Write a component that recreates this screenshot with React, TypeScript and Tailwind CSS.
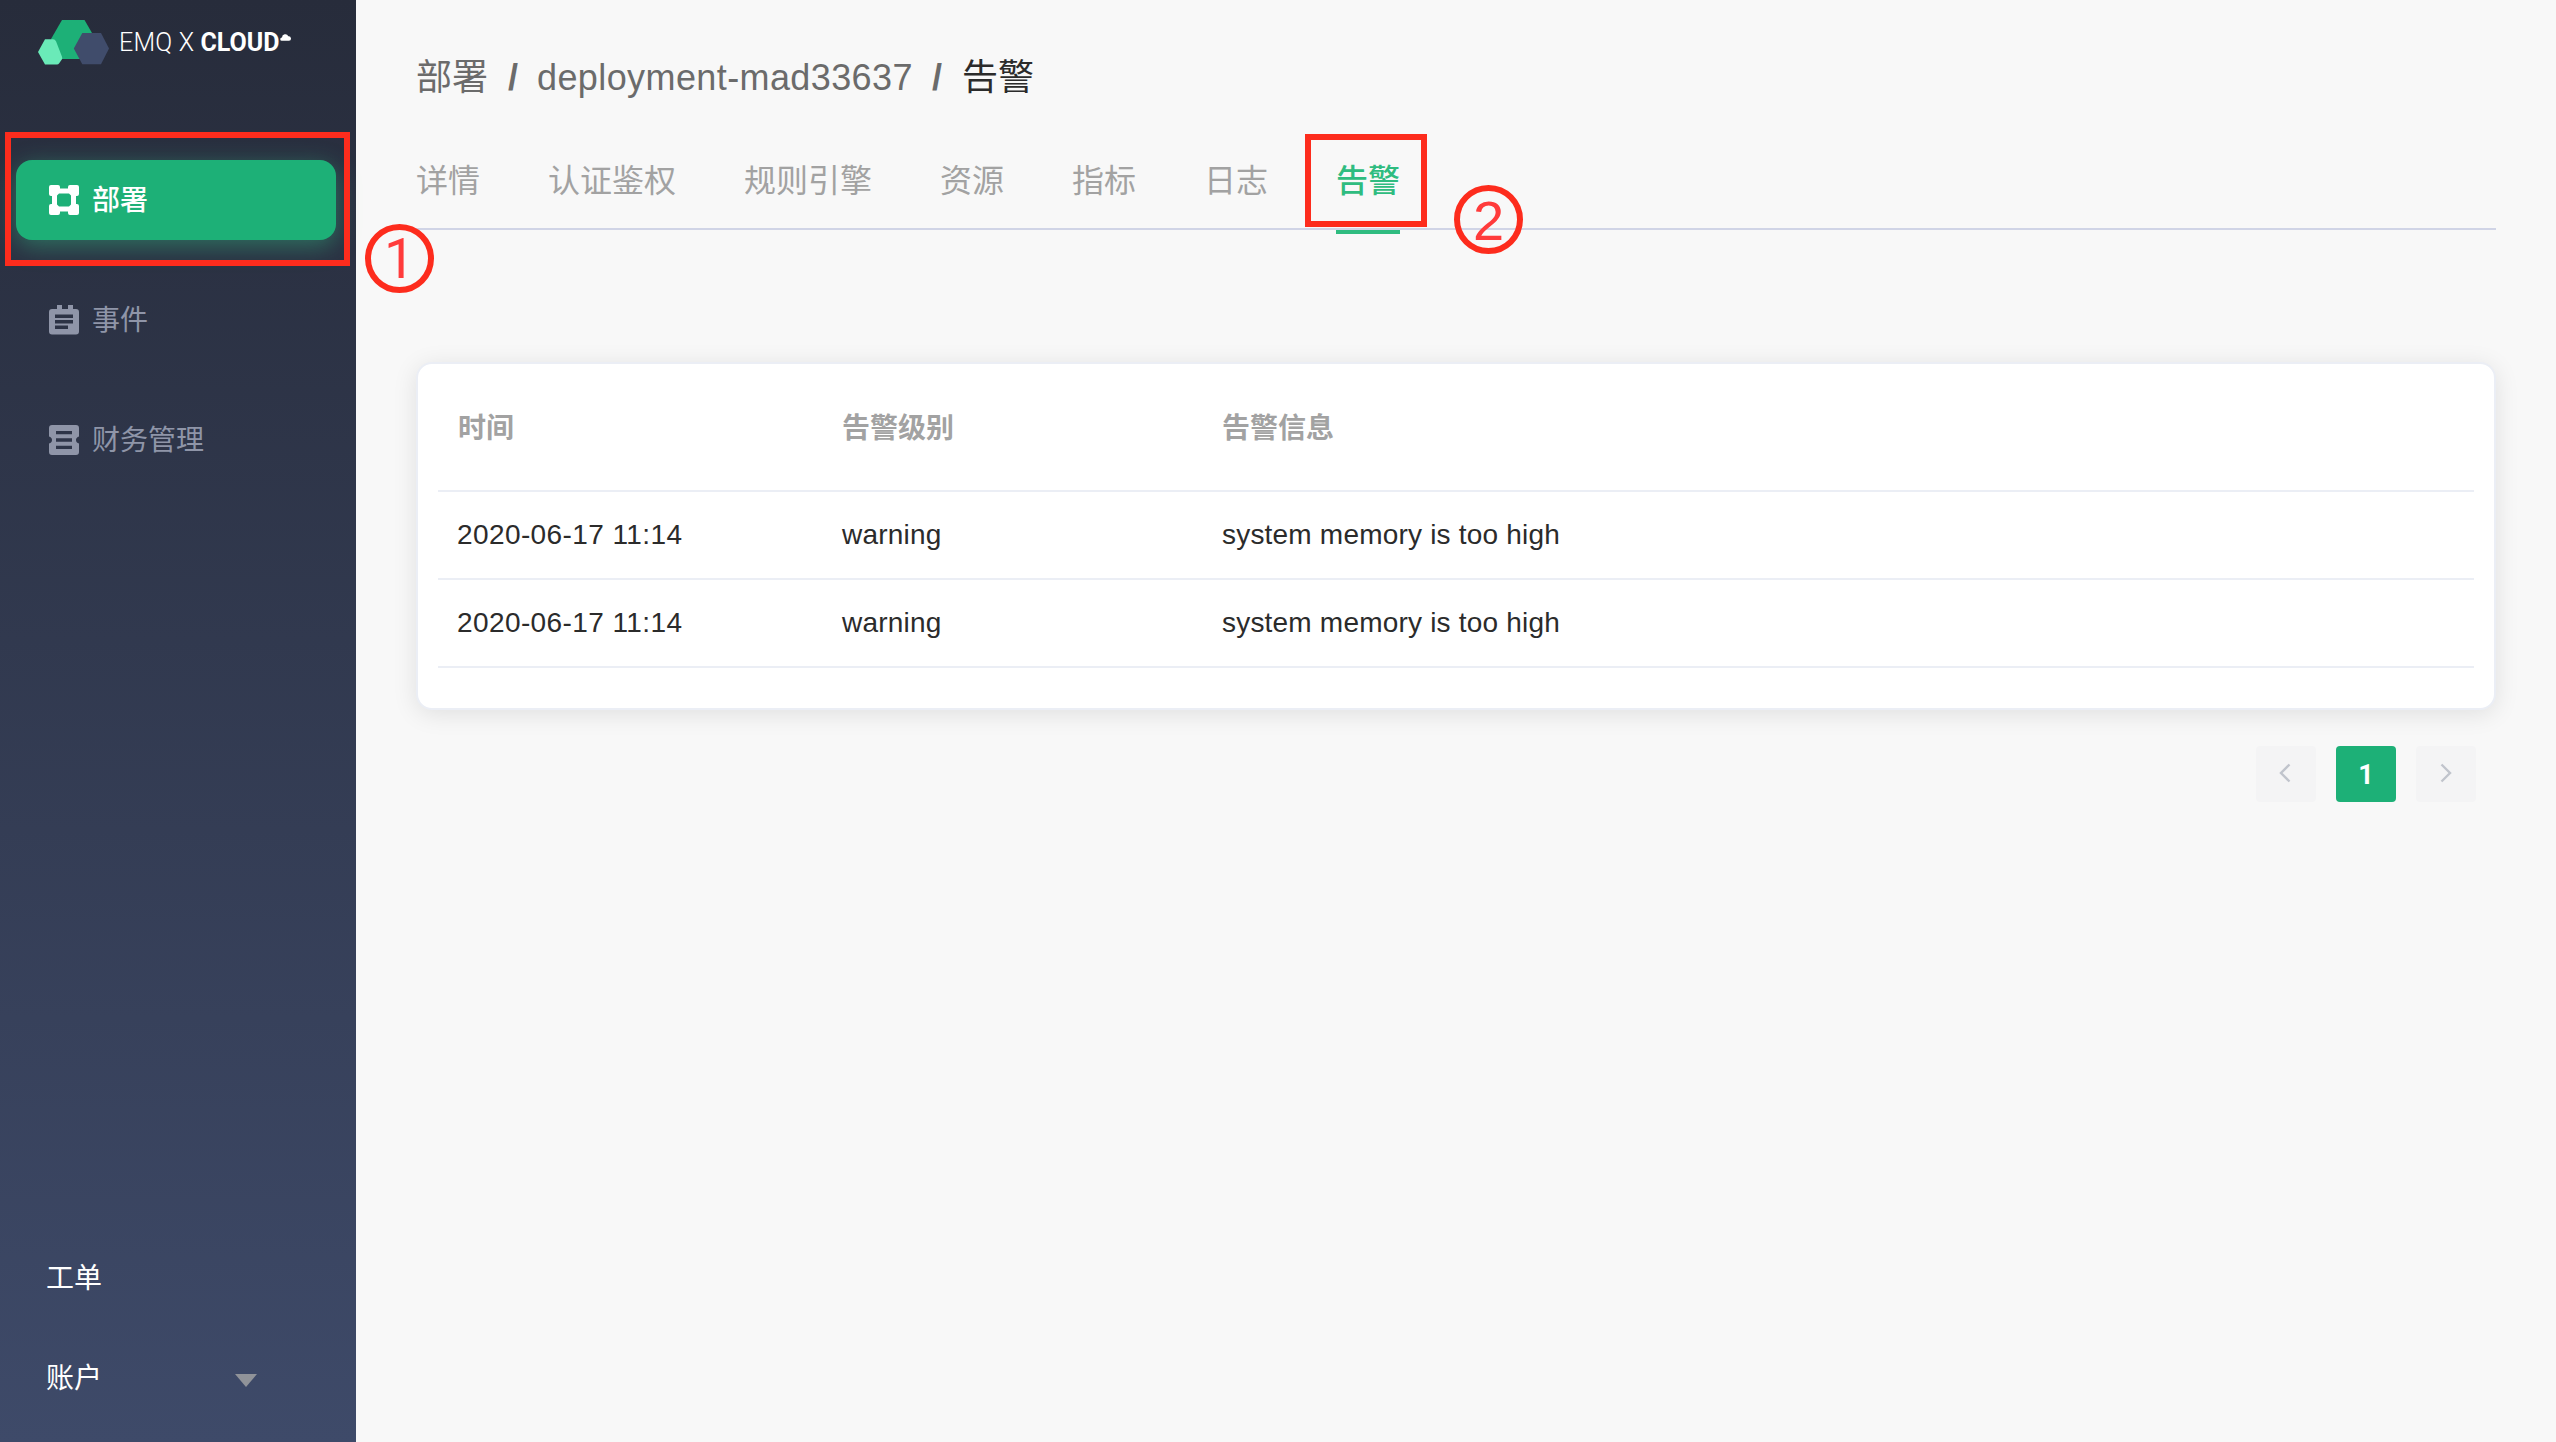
const tabs = ['详情', '认证鉴权', '规则引擎', '资源', '指标', '日志', '告警'];
const alerts = [
  { time: '2020-06-17 11:14', level: 'warning', message: 'system memory is too high' },
  { time: '2020-06-17 11:14', level: 'warning', message: 'system memory is too high' },
];

function Logo() {
  return (
    <div className="flex h-[88px] pl-[37px]">
      <svg className="mt-[19px] h-[47px] w-[73px]" viewBox="0 0 73 47">
        <path d="M25 1h22.500l11 19-11 20h-22.500l-11-20z" fill="#1db077" />
        <path d="M8 20.300h8q2 0 3 2l6 15.500q.500 1.500 0 2.500l-3 4.200q-.600 1-2 1h-12l-7-12.500z" fill="#6aeab8" />
        <path d="M45.300 14h18.700l8 15.500-8 15.700h-18.700l-8.500-15.700z" fill="#404c6b" />
      </svg>
      <div className="ml-[9px] mt-[27px] flex h-8 items-center whitespace-pre font-['Roboto'] text-[25px] leading-8 text-white">
        <span className="font-light tracking-[0.2px]">EMQ X </span>
        <span className="font-bold">CLOUD</span>
        <svg className="mb-[13px] h-2 w-[11px]" viewBox="0 0 11 8">
          <path d="M1.800 7.800a1.600 1.600 0 0 1 .2-3.300A3.300 3.300 0 0 1 8.300 3.200A2.300 2.300 0 0 1 9 7.800z" fill="#fff" />
        </svg>
      </div>
    </div>
  );
}

function DeployIcon() {
  return (
    <svg className="size-[30px]" viewBox="0 0 30 30" fill="currentColor">
      <path
        fillRule="evenodd"
        d="M2 0h7q2 0 2 2v1.500h8v-1.500q0-2 2-2h7q2 0 2 2v7q0 2-2 2h-1v8h1q2 0 2 2v7q0 2-2 2h-7q-2 0-2-2v-1.500h-8v1.500q0 2-2 2h-7q-2 0-2-2v-7q0-2 2-2h1v-8h-1q-2 0-2-2v-7q0-2 2-2zM10 8.500l-2 2v9l2 2h10l2-2v-9l-2-2z"
      />
    </svg>
  );
}

function EventIcon() {
  return (
    <svg className="size-[30px]" viewBox="0 0 30 30" fill="currentColor">
      <path
        fillRule="evenodd"
        d="M8 0h5v4h6v-4h5v4h3q3 0 3 3v19.500q0 3-3 3h-24q-3 0-3-3v-19.500q0-3 3-3h5zM6 9.500v3.500h18v-3.500zM6 15v3.500h18v-3.500zM6 20.500v3.500h13v-3.500z"
      />
    </svg>
  );
}

function FinanceIcon() {
  return (
    <svg className="size-[30px]" viewBox="0 0 30 30" fill="currentColor">
      <path
        fillRule="evenodd"
        d="M3 0h24q3 0 3 3v8.500q-3 1-3 3.500t3 3.500v8.500q0 3-3 3h-24q-3 0-3-3v-8.500q3-1 3-3.500t-3-3.500v-8.500q0-3 3-3zM7 6v3.300h16v-3.300zM7 13.300v3.400h16v-3.400zM7 20.700v3.300h16v-3.300z"
      />
    </svg>
  );
}

function Sidebar() {
  return (
    <aside className="flex w-[356px] shrink-0 flex-col bg-linear-to-b from-[#272c3b] to-[#3e4a69]">
      <Logo />
      <nav className="mt-[72px] flex flex-col gap-10 px-4 text-[28px] text-[#8f95a8]">
        <div className="relative flex h-20 w-80 items-center gap-[13px] rounded-2xl bg-[#1db077] pl-[33px] font-medium text-white shadow-[0_6px_24px_rgba(52,195,136,0.45)]">
          <DeployIcon />
          <span className="pt-[2px]">部署</span>
          <div className="absolute -left-[11px] -top-7 h-[134px] w-[345px] border-[6px] border-[#fd2c1d]" />
        </div>
        <div className="flex h-20 w-80 items-center gap-[13px] pl-[33px]">
          <EventIcon />
          <span className="pt-[2px]">事件</span>
        </div>
        <div className="flex h-20 w-80 items-center gap-[13px] pl-[33px]">
          <FinanceIcon />
          <span className="pt-[2px]">财务管理</span>
        </div>
      </nav>
      <div className="mb-[33px] mt-auto flex flex-col pl-[46px] text-[28px] leading-[60px] text-white">
        <span className="mb-10">工单</span>
        <div className="flex items-center">
          <span>账户</span>
          <svg className="ml-[133px] mt-0.5 h-[13px] w-[22px]" viewBox="0 0 22 13">
            <path d="M0 0h22l-11 13z" fill="#909399" />
          </svg>
        </div>
      </div>
    </aside>
  );
}

export default function App() {
  return (
    <div className="relative flex h-[1442px] w-[2556px] overflow-hidden bg-[#f8f8f8] font-['Liberation_Sans','Noto_Sans_CJK_SC',sans-serif]">
      <Sidebar />
      <main className="flex flex-1 flex-col px-[60px]">
        <div className="mt-[50px] flex h-14 items-center text-[36px] leading-[56px] text-[#6b6b6b]">
          <span>部署</span>
          <span className="ml-5 mr-[15px] w-[14px] font-bold">/</span>
          <span className="w-[376px] whitespace-nowrap tracking-[0.4px]">deployment-mad33637</span>
          <span className="ml-[19px] mr-4 w-[14px] font-bold">/</span>
          <span className="text-[#2b2b2b]">告警</span>
        </div>
        <div className="mt-[26px] flex h-[98px] gap-[68px] border-b-2 border-[#d0d4e6] text-[32px] leading-[98px] text-[#a2a2a2]">
          {tabs.map((tab) =>
            tab === '告警' ? (
              <div key={tab} className="relative">
                <span className="font-medium text-[#2fbc80]">{tab}</span>
                <div className="absolute left-0 top-[98px] h-1 w-16 bg-[#2fbc80]" />
                <div className="absolute -left-[31px] top-[2px] h-[93px] w-[122px] border-[6px] border-[#fd2c1d]" />
              </div>
            ) : (
              <span key={tab}>{tab}</span>
            ),
          )}
        </div>
        <section className="mt-[132px] h-[348px] rounded-2xl border-2 border-[#ebeef5] bg-white px-5 shadow-[0_4px_24px_rgba(0,0,0,0.1)]">
          <div className="grid h-32 grid-cols-[384px_380px_1fr] items-center border-b-2 border-[#ebeef5] pl-5 pt-1 text-[28px] font-bold text-[#a2a2a2]">
            <span>时间</span>
            <span>告警级别</span>
            <span>告警信息</span>
          </div>
          {alerts.map((row, i) => (
            <div
              key={i}
              className="grid h-[88px] grid-cols-[384px_380px_1fr] items-center border-b-2 border-[#ebeef5] pl-5 text-[28px] text-[#2b2b2b]"
            >
              <span className="-ml-px tracking-[0.4px]">{row.time}</span>
              <span className="tracking-[0.2px]">{row.level}</span>
              <span className="tracking-[0.2px]">{row.message}</span>
            </div>
          ))}
        </section>
        <div className="mr-5 mt-9 flex gap-5 self-end">
          <button className="flex h-14 w-[60px] items-center justify-center rounded bg-[#f4f4f5]">
            <svg className="mb-0.5 mr-0.5 h-5 w-3" viewBox="0 0 12 20" fill="none" stroke="#c0c4cc" strokeWidth="2.400">
              <path d="M10.500 1.500L2 10l8.500 8.500" />
            </svg>
          </button>
          <button className="flex h-14 w-[60px] items-center justify-center rounded bg-[#1db077] pt-0.5 font-['Roboto'] text-[27px] font-bold text-white">
            1
          </button>
          <button className="flex h-14 w-[60px] items-center justify-center rounded bg-[#f4f4f5]">
            <svg className="mb-0.5 h-5 w-3" viewBox="0 0 12 20" fill="none" stroke="#c0c4cc" strokeWidth="2.400">
              <path d="M1.500 1.500L10 10l-8.500 8.500" />
            </svg>
          </button>
        </div>
      </main>
      <div className="absolute left-[365px] top-[224px] flex size-[69px] items-center justify-center rounded-full border-[6px] border-[#fd2c1d] pt-0.5 font-['Roboto'] text-[55px] text-[#ff3b3b]">
        1
      </div>
      <div className="absolute left-[1454px] top-[185px] flex size-[69px] items-center justify-center rounded-full border-[6px] border-[#fd2c1d] pt-0.5 text-[56px] text-[#ff3b3b]">
        2
      </div>
    </div>
  );
}
